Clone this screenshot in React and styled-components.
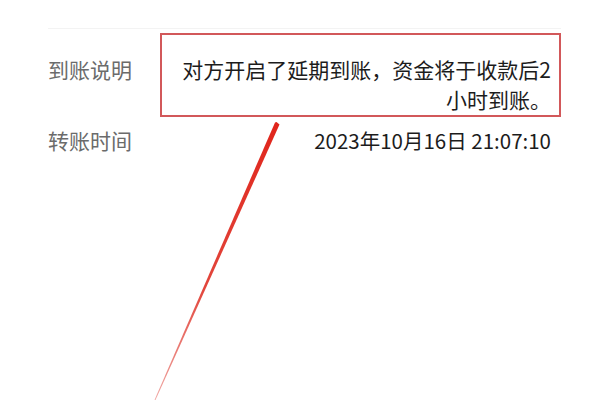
import styled, { createGlobalStyle } from 'styled-components';

const GlobalStyle = createGlobalStyle`
  html, body {
    margin: 0;
    padding: 0;
    background: #fff;
  }
  body {
    font-family: "Noto Sans CJK SC", "Noto Sans", sans-serif;
  }
`;

const App = () => {
  return (
    <Page>
      <GlobalStyle />
      <Divider />
      <Row $gap={4}>
        <Label $top={21}>到账说明</Label>
        <NoteBox>
          <Value>对方开启了延期到账，资金将于收款后2小时到账。</Value>
        </NoteBox>
      </Row>
      <Row $gap={8}>
        <Label>转账时间</Label>
        <Value $inset={10} $size={20.5}>
          2023年10月16日 21:07:10
        </Value>
      </Row>
      <Arrow width='140' height='280' viewBox='0 0 140 280'>
        <defs>
          <linearGradient id='arrowFade' x1='0' y1='0' x2='0' y2='1'>
            <stop offset='0' stopColor='#e0251b' />
            <stop offset='0.6' stopColor='#e2463c' />
            <stop offset='1' stopColor='#f0a8a4' />
          </linearGradient>
        </defs>
        <polygon
          points='129.5,4.5 126.5,2 125,2.5 4.6,279.8 5.4,280.2'
          fill='url(#arrowFade)'
        />
      </Arrow>
    </Page>
  );
};

const Page = styled.div`
  position: relative;
  width: 600px;
  height: 400px;
  overflow: hidden;
  box-sizing: border-box;
  padding: 28px 39px 0 48px;
  background: #fff;
`;

const Divider = styled.div`
  height: 1px;
  background: #f3f3f3;
`;

const Row = styled.div`
  display: flex;
  align-items: flex-start;
  margin-top: ${(p) => p.$gap}px;
`;

const Label = styled.div`
  width: 112px;
  flex-shrink: 0;
  padding-top: ${(p) => p.$top || 0}px;
  font-size: 21px;
  line-height: 30px;
  color: #6b6b6b;
  white-space: nowrap;
`;

const NoteBox = styled.div`
  flex: 1;
  height: 84px;
  box-sizing: border-box;
  border: 2px solid #d2585a;
  padding: 19px 8px 0 14px;
`;

const Value = styled.div`
  flex: 1;
  font-size: ${(p) => p.$size || 21}px;
  line-height: 30px;
  color: #1c1c1c;
  text-align: right;
  padding-right: ${(p) => p.$inset || 0}px;
`;

const Arrow = styled.svg`
  position: absolute;
  left: 150px;
  top: 120px;
`;

export default App;
